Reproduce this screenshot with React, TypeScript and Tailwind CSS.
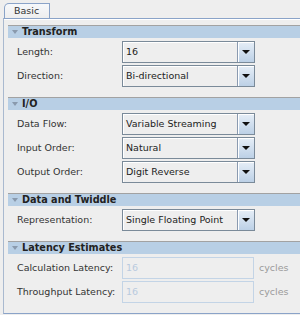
import React from 'react';

type Field = { label: string; value: string };

function Combo({ value }: { value: string }) {
  return (
    <div className="flex h-[22px] w-[133px] border border-[#7a8a99] bg-[#eeeeee] shadow-[inset_1px_1px_0_#ffffff]">
      <div className="flex flex-1 items-center pl-[3px] text-[9.5px] text-[#222]">{value}</div>
      <div className="flex w-[17px] items-center justify-center border-l border-[#8a9ab0] bg-gradient-to-b from-[#e6eef7] to-[#bcd0e6] shadow-[inset_1px_1px_0_#ffffff]">
        <div className="h-0 w-0 border-x-[4px] border-t-[4px] border-x-transparent border-t-[#111]" />
      </div>
    </div>
  );
}

function Section({ title, children }: { title: string; children: React.ReactNode }) {
  return (
    <div className="border-t border-[#a2a2a2]">
      <div className="flex h-[12px] items-center bg-[#b8cfe5] pl-[4px]">
        <div className="mr-[4px] h-0 w-0 border-x-[3px] border-t-[4px] border-x-transparent border-t-[#8a9aad]" />
        <span className="text-[9.7px] font-bold leading-none text-[#222]">{title}</span>
      </div>
      <div className="flex flex-col gap-[2px] pb-[10px] pt-[3px]">{children}</div>
    </div>
  );
}

function ComboRow({ label, value }: Field) {
  return (
    <div className="flex items-center">
      <div className="w-[114px] pl-[9px] text-[9.5px] text-[#333]">{label}</div>
      <Combo value={value} />
    </div>
  );
}

function LatencyRow({ label, value }: Field) {
  return (
    <div className="flex items-center">
      <div className="w-[114px] pl-[9px] text-[9.5px] text-[#333]">{label}</div>
      <div className="flex h-[22px] w-[132px] items-center border border-[#c3d4e6] bg-[#eeeeee] pl-[3px] text-[9.5px] text-[#b9cade]">
        {value}
      </div>
      <span className="ml-[5px] text-[9.5px] text-[#9a9a9a]">cycles</span>
    </div>
  );
}

export default function App() {
  return (
    <div
      className="h-[315px] w-[300px] overflow-hidden bg-[#eeeeee]"
      style={{ fontFamily: '"DejaVu Sans", sans-serif' }}
    >
      {/* tab strip */}
      <div className="flex h-[18px] items-end pl-[4px] pt-[3px]">
        <div className="flex h-[15px] w-[46px] items-center rounded-tl-[5px] border border-b-0 border-[#8aa3c8] bg-gradient-to-b from-[#f6f8fb] to-[#eeeeee] pl-[9px] text-[9.5px] text-[#333]">
          Basic
        </div>
      </div>

      {/* panel */}
      <div className="ml-[3px] w-[320px] border-y border-l border-y-[#8aa3c8] border-l-[#a9b9cf]">
        <div className="h-[6px] border-t border-white" />
        <div className="pl-[4px]">
          <Section title="Transform">
            <ComboRow label="Length:" value="16" />
            <ComboRow label="Direction:" value="Bi-directional" />
          </Section>
          <Section title="I/O">
            <ComboRow label="Data Flow:" value="Variable Streaming" />
            <ComboRow label="Input Order:" value="Natural" />
            <ComboRow label="Output Order:" value="Digit Reverse" />
          </Section>
          <Section title="Data and Twiddle">
            <ComboRow label="Representation:" value="Single Floating Point" />
          </Section>
          <Section title="Latency Estimates">
            <LatencyRow label="Calculation Latency:" value="16" />
            <LatencyRow label="Throughput Latency:" value="16" />
          </Section>
        </div>
      </div>
    </div>
  );
}
